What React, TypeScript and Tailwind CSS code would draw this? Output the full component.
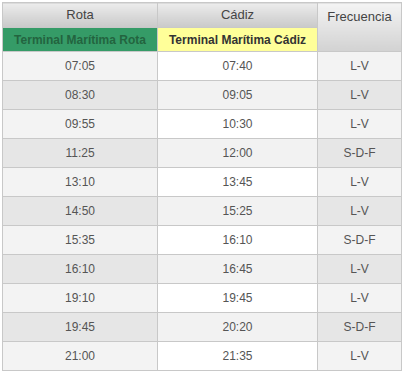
import React from 'react';

const rows: [string, string, string][] = [
  ['07:05', '07:40', 'L-V'],
  ['08:30', '09:05', 'L-V'],
  ['09:55', '10:30', 'L-V'],
  ['11:25', '12:00', 'S-D-F'],
  ['13:10', '13:45', 'L-V'],
  ['14:50', '15:25', 'L-V'],
  ['15:35', '16:10', 'S-D-F'],
  ['16:10', '16:45', 'L-V'],
  ['19:10', '19:45', 'L-V'],
  ['19:45', '20:20', 'S-D-F'],
  ['21:00', '21:35', 'L-V'],
];

export default function App() {
  return (
    <div className="w-[404px] h-[373px] bg-white p-[2px] font-['Liberation_Sans',Arial,sans-serif] text-[12px]">
      <table className="w-[399px] border-collapse border border-[#c8c8c8] table-fixed">
        <colgroup>
          <col className="w-[155px]" />
          <col className="w-[160px]" />
          <col className="w-[84px]" />
        </colgroup>
        <thead>
          <tr className="h-[25px]">
            <th className="border border-[#c8c8c8] bg-gradient-to-b from-[#ececec] to-[#c9c9c9] font-normal text-[#444] text-[13px] text-center">
              Rota
            </th>
            <th className="border border-[#c8c8c8] bg-gradient-to-b from-[#ececec] to-[#c9c9c9] font-normal text-[#444] text-[13px] text-center">
              Cádiz
            </th>
            <th
              rowSpan={2}
              className="border border-[#c8c8c8] bg-gradient-to-b from-[#f4f4f4] to-[#d2d2d2] font-normal text-[#444] text-[13px] text-center align-top pt-[4px]"
            >
              Frecuencia
            </th>
          </tr>
          <tr className="h-[24px]">
            <th className="border border-[#c8c8c8] bg-[#359b67] text-[#23643f] font-bold text-center">
              Terminal Marítima Rota
            </th>
            <th className="border border-[#c8c8c8] bg-[#ffff99] text-[#333] font-bold text-center">
              Terminal Marítima Cádiz
            </th>
          </tr>
        </thead>
        <tbody>
          {rows.map(([a, b, c], i) => {
            const even = i % 2 === 1;
            return (
              <tr key={i} className="h-[29px] text-[#555] text-center">
                <td className={`border border-[#c8c8c8] ${even ? 'bg-[#e6e6e6]' : 'bg-[#f3f3f3]'}`}>{a}</td>
                <td className={`border border-[#c8c8c8] ${even ? 'bg-[#f2f2f2]' : 'bg-white'}`}>{b}</td>
                <td className={`border border-[#c8c8c8] ${even ? 'bg-[#e6e6e6]' : 'bg-[#f3f3f3]'}`}>{c}</td>
              </tr>
            );
          })}
        </tbody>
      </table>
    </div>
  );
}
